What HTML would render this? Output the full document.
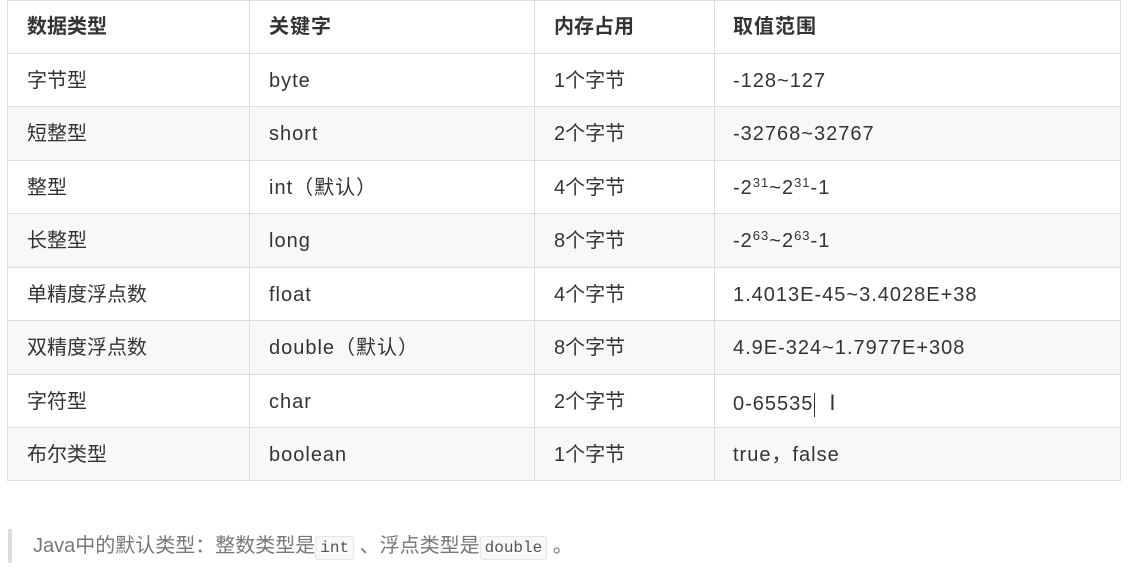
<!DOCTYPE html>
<html><head><meta charset="utf-8"><style>
*{margin:0;padding:0;box-sizing:border-box}
body{width:1131px;height:572px;background:#fff;font-family:"Liberation Sans","Noto Sans CJK SC",sans-serif;color:#333;overflow:hidden;position:relative}
.r{position:absolute;left:7px;width:1114px;height:54px;border:1px solid #ddd;border-bottom:none}
.r.g{background:#f8f8f8}
.c{position:absolute;top:0;height:100%;line-height:55px;font-size:20px;padding-left:19px;white-space:nowrap}
.c1{left:0;width:241px}.c2{left:241px;width:285px;border-left:1px solid #ddd}.c3{left:526px;width:180px;border-left:1px solid #ddd}.c4{left:706px;width:406px;border-left:1px solid #ddd;padding-left:18px}
.c2,.c4{letter-spacing:1px}
.h .c{font-weight:bold;line-height:52px}
sup{font-size:13px;vertical-align:7px;line-height:0}
.bq{position:absolute;left:8px;top:529px;height:34px;border-left:4px solid #ddd;padding-left:21px;font-size:20px;color:#777;line-height:34px;white-space:nowrap}
code{font-family:"Liberation Mono",monospace;font-size:16px;border:1px solid #e5e5e5;background:#f8f8f8;border-radius:3px;padding:2px 4px;color:#555}
</style></head><body>
<div class="r h" style="top:0"><div class="c c1">数据类型</div><div class="c c2">关键字</div><div class="c c3">内存占用</div><div class="c c4">取值范围</div></div>
<div class="r" style="top:53px"><div class="c c1">字节型</div><div class="c c2">byte</div><div class="c c3">1个字节</div><div class="c c4">-128~127</div></div>
<div class="r g" style="top:106px"><div class="c c1">短整型</div><div class="c c2">short</div><div class="c c3">2个字节</div><div class="c c4">-32768~32767</div></div>
<div class="r" style="top:160px"><div class="c c1">整型</div><div class="c c2">int（默认）</div><div class="c c3">4个字节</div><div class="c c4">-2<sup>31</sup>~2<sup>31</sup>-1</div></div>
<div class="r g" style="top:213px"><div class="c c1">长整型</div><div class="c c2">long</div><div class="c c3">8个字节</div><div class="c c4">-2<sup>63</sup>~2<sup>63</sup>-1</div></div>
<div class="r" style="top:267px"><div class="c c1">单精度浮点数</div><div class="c c2">float</div><div class="c c3">4个字节</div><div class="c c4">1.4013E-45~3.4028E+38</div></div>
<div class="r g" style="top:320px"><div class="c c1">双精度浮点数</div><div class="c c2">double（默认）</div><div class="c c3">8个字节</div><div class="c c4">4.9E-324~1.7977E+308</div></div>
<div class="r" style="top:374px"><div class="c c1">字符型</div><div class="c c2">char</div><div class="c c3">2个字节</div><div class="c c4">0-65535<span style="display:inline-block;width:1px;height:24px;background:#333;vertical-align:middle;margin-left:1px"></span><span style="margin-left:14px;font-size:22px">I</span></div></div>
<div class="r g" style="top:427px;height:54px;border-bottom:1px solid #ddd"><div class="c c1">布尔类型</div><div class="c c2">boolean</div><div class="c c3">1个字节</div><div class="c c4">true，false</div></div>
<div class="bq">Java中的默认类型：整数类型是<code>int</code> 、浮点类型是<code>double</code> 。</div>
</body></html>
